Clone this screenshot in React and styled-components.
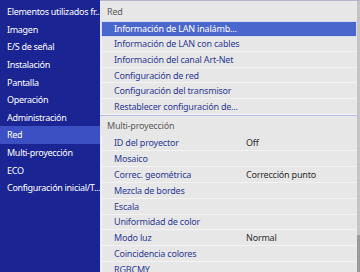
import styled, { createGlobalStyle } from "styled-components";

const Global = createGlobalStyle`
  html, body {
    margin: 0;
    padding: 0;
    background: #1a2492;
  }
  * {
    box-sizing: border-box;
  }
`;

const Screen = styled.div`
  display: flex;
  width: 360px;
  height: 272px;
  overflow: hidden;
  font-family: "Noto Sans", "Open Sans", sans-serif;
  font-size: 9px;
  letter-spacing: -0.2px;
`;

const Sidebar = styled.div`
  width: 100px;
  flex: none;
  background: #1a2492;
  padding-top: 3px;
  display: flex;
  flex-direction: column;
  overflow: hidden;
`;

const SideItem = styled.div`
  height: 17.6px;
  display: flex;
  align-items: center;
  padding-left: 7px;
  color: #ffffff;
  letter-spacing: -0.3px;
  background: ${(p) => (p.$active ? "#3c50c4" : "transparent")};
  white-space: nowrap;
`;

const Panel = styled.div`
  flex: 1;
  display: flex;
  background: #e7e7e7;
  border-top: 1px solid #b4b6cc;
`;

const Content = styled.div`
  flex: 1;
  display: flex;
  flex-direction: column;
`;

const SectionTitle = styled.div`
  height: ${(p) => (p.$divider ? "21px" : "20px")};
  flex: none;
  display: flex;
  align-items: center;
  padding-left: 7px;
  color: #5a5a5a;
  border-top: ${(p) => (p.$divider ? "1px solid #b9bde4" : "none")};
`;

const Row = styled.div`
  height: ${(p) => p.$h}px;
  flex: none;
  margin-left: 1px;
  display: grid;
  grid-template-columns: 132px 1fr;
  align-items: center;
  padding-left: 12px;
  color: ${(p) => (p.$selected ? "#ffffff" : "#2d3a94")};
  background: ${(p) => (p.$selected ? "#4b66cd" : "transparent")};
  border: ${(p) => (p.$selected ? "1px solid #d6dcf4" : "none")};
  border-bottom: 1px solid ${(p) => (p.$selected ? "#d6dcf4" : "#f3f3f3")};
  border-left: 1px solid ${(p) => (p.$selected ? "#d6dcf4" : "#f3f3f3")};
  white-space: nowrap;
`;

const Value = styled.span`
  color: #2e2e2e;
`;

const Scrollbar = styled.div`
  width: 3px;
  flex: none;
  background: #c4c4c4;
  display: flex;
  flex-direction: column;
  justify-content: flex-end;
`;

const Thumb = styled.div`
  height: 37px;
  background: #9a9a9a;
`;

const menu = [
  "Elementos utilizados fr...",
  "Imagen",
  "E/S de señal",
  "Instalación",
  "Pantalla",
  "Operación",
  "Administración",
  "Red",
  "Multi-proyección",
  "ECO",
  "Configuración inicial/T...",
];

const red = [
  "Información de LAN inalámb...",
  "Información de LAN con cables",
  "Información del canal Art-Net",
  "Configuración de red",
  "Configuración del transmisor",
  "Restablecer configuración de...",
];

const multi = [
  ["ID del proyector", "Off"],
  ["Mosaico", ""],
  ["Correc. geométrica", "Corrección punto"],
  ["Mezcla de bordes", ""],
  ["Escala", ""],
  ["Uniformidad de color", ""],
  ["Modo luz", "Normal"],
  ["Coincidencia colores", ""],
  ["RGBCMY", ""],
];

export default function App() {
  return (
    <>
      <Global />
      <Screen>
        <Sidebar>
          {menu.map((m) => (
            <SideItem key={m} $active={m === "Red"}>
              {m}
            </SideItem>
          ))}
        </Sidebar>
        <Panel>
          <Content>
            <SectionTitle>Red</SectionTitle>
            {red.map((r, i) => (
              <Row key={r} $h={15.6} $selected={i === 0}>
                <span>{r}</span>
              </Row>
            ))}
            <SectionTitle $divider>Multi-proyección</SectionTitle>
            {multi.map(([label, value]) => (
              <Row key={label} $h={15.8}>
                <span>{label}</span>
                <Value>{value}</Value>
              </Row>
            ))}
          </Content>
          <Scrollbar>
            <Thumb />
          </Scrollbar>
        </Panel>
      </Screen>
    </>
  );
}
